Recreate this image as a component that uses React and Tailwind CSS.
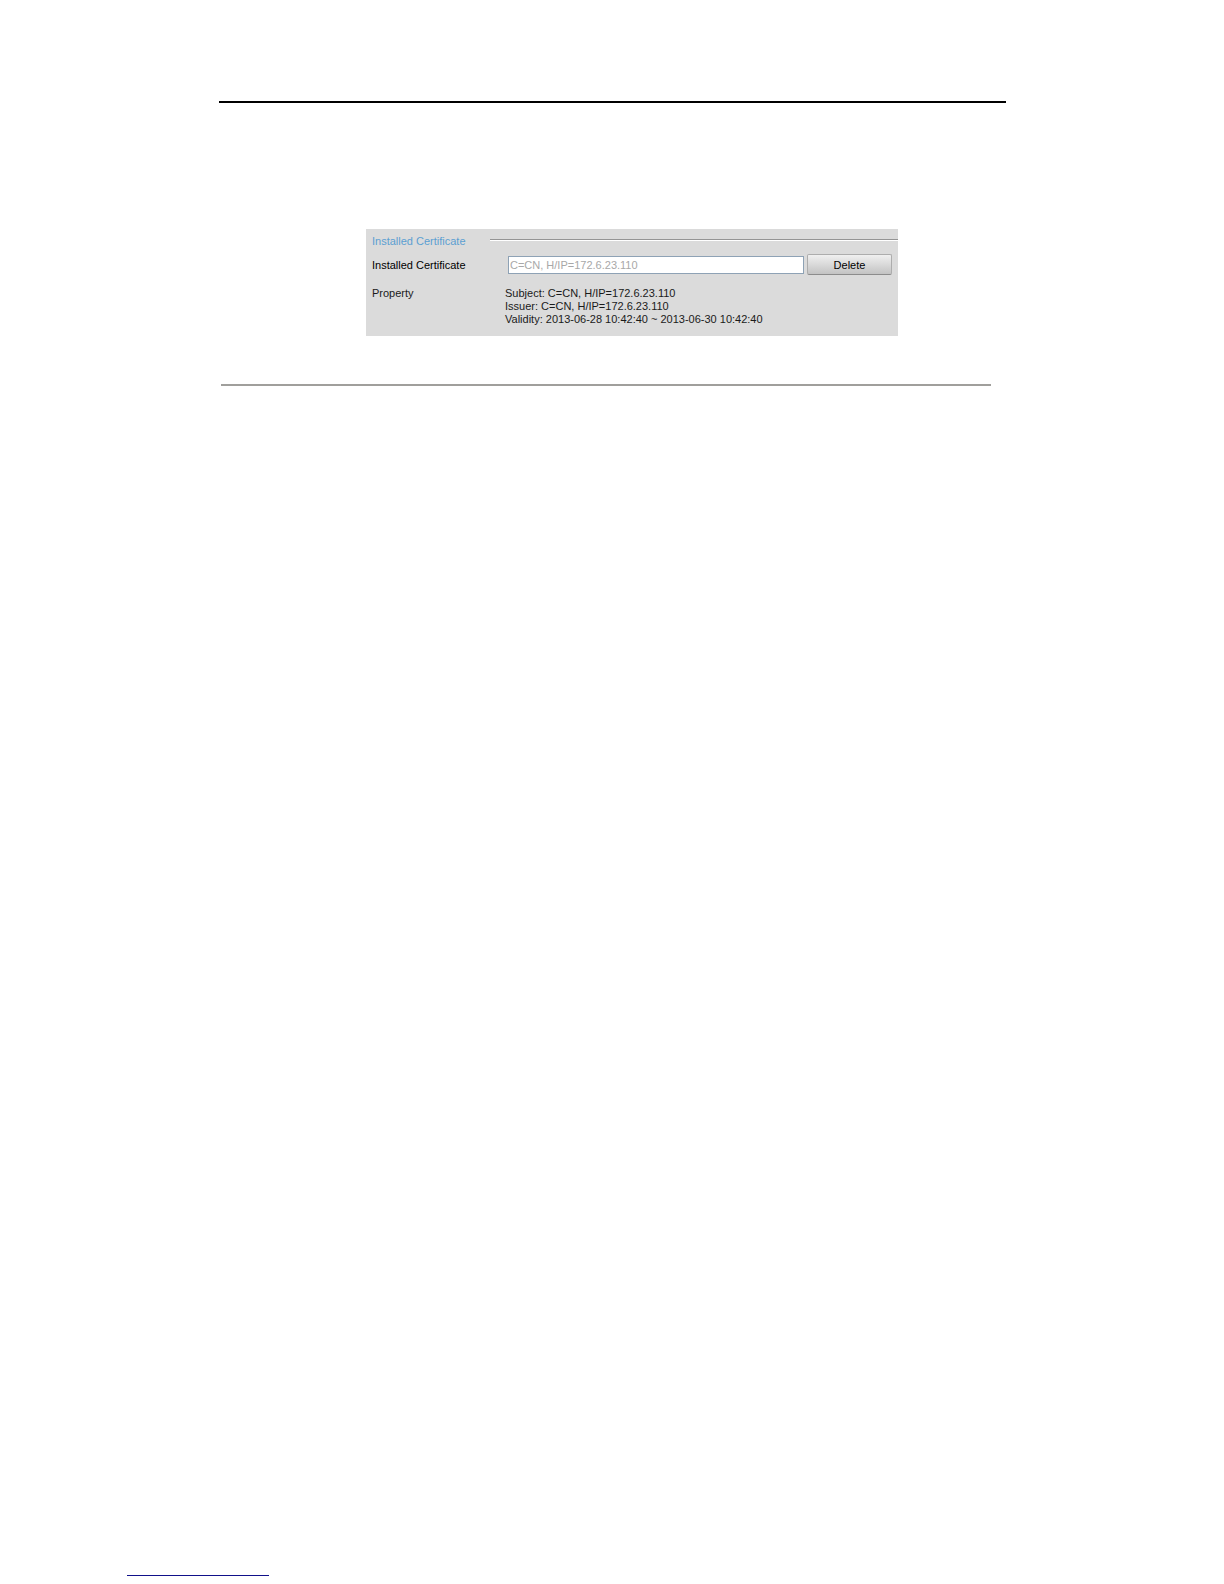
import { useState } from "react";

const properties = [
  { label: "Subject", value: "C=CN, H/IP=172.6.23.110" },
  { label: "Issuer", value: "C=CN, H/IP=172.6.23.110" },
  { label: "Validity", value: "2013-06-28 10:42:40 ~ 2013-06-30 10:42:40" },
];

function InstalledCertificate() {
  const [certificate, setCertificate] = useState("C=CN, H/IP=172.6.23.110");

  return (
    <section className="bg-[#dbdbdb] pt-[5px] pb-[10px] pl-[6px] text-[11px] leading-[14px] text-[#1a1a1a]">
      {/* Section title with an engraved rule */}
      <div className="flex items-start">
        <h2 className="w-[118px] shrink-0 text-[#5b9fd2]">
          Installed Certificate
        </h2>
        <div className="mt-[5px] h-[2px] flex-1 border-t border-[#949494] bg-white"></div>
      </div>

      <div className="mt-[6px] flex items-center pr-[6px]">
        <label htmlFor="certificate" className="w-[136px] shrink-0 text-black">
          Installed Certificate
        </label>
        <input
          id="certificate"
          type="text"
          readOnly
          value={certificate}
          className="h-[18px] min-w-0 flex-1 border border-[#8ea2b5] bg-white px-px text-[#a8a8a8] outline-none"
        />
        <button
          type="button"
          onClick={() => setCertificate("")}
          className="ml-[3px] h-[21px] w-[85px] shrink-0 rounded-[2px] border border-[#adadad] border-b-[#8c8c8c] bg-linear-to-b from-[#f0f0f0] to-[#c3c3c3] text-black"
        >
          Delete
        </button>
      </div>

      <div className="mt-3 flex leading-[13px]">
        <p className="w-[133px] shrink-0">Property</p>
        <ul>
          {properties.map((item) => (
            <li key={item.label}>
              {item.label}: {item.value}
            </li>
          ))}
        </ul>
      </div>
    </section>
  );
}

export default function App() {
  return (
    <div className="flex min-h-screen flex-col bg-white font-['Liberation_Sans',Arial,sans-serif]">
      <main className="pt-[101px] pr-[218px] pl-[219px]">
        <hr className="border-t-2 border-black" />
        <div className="mt-[126px] pr-[108px] pl-[147px]">
          <InstalledCertificate />
        </div>
        <hr className="mt-12 mr-[15px] ml-[2px] border-t-2 border-[#a09f9c]" />
      </main>

      <footer className="mt-auto pb-2 pl-[127px]">
        <hr className="w-[142px] border-t border-[#11118a]" />
      </footer>
    </div>
  );
}
